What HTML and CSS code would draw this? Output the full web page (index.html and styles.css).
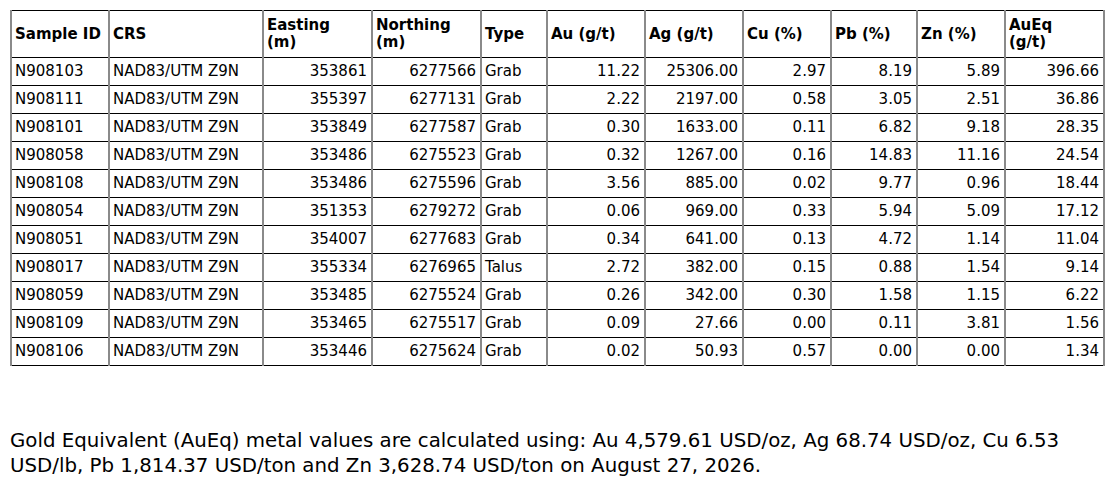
FILE: index.html
```html
<!DOCTYPE html>
<html>
<head>
<meta charset="utf-8">
<link rel="stylesheet" href="styles.css">
</head>
<body>
<table class="assay">
<colgroup>
<col class="c1"><col class="c2"><col class="c3"><col class="c4"><col class="c5"><col class="c6"><col class="c7"><col class="c8"><col class="c9"><col class="c10"><col class="c11">
</colgroup>
<thead>
<tr><th>Sample ID</th><th>CRS</th><th>Easting<br>(m)</th><th>Northing<br>(m)</th><th>Type</th><th>Au (g/t)</th><th>Ag (g/t)</th><th>Cu (%)</th><th>Pb (%)</th><th>Zn (%)</th><th>AuEq<br>(g/t)</th></tr>
</thead>
<tbody>
<tr><td>N908103</td><td>NAD83/UTM Z9N</td><td class="n">353861</td><td class="n">6277566</td><td>Grab</td><td class="n">11.22</td><td class="n">25306.00</td><td class="n">2.97</td><td class="n">8.19</td><td class="n">5.89</td><td class="n">396.66</td></tr>
<tr><td>N908111</td><td>NAD83/UTM Z9N</td><td class="n">355397</td><td class="n">6277131</td><td>Grab</td><td class="n">2.22</td><td class="n">2197.00</td><td class="n">0.58</td><td class="n">3.05</td><td class="n">2.51</td><td class="n">36.86</td></tr>
<tr><td>N908101</td><td>NAD83/UTM Z9N</td><td class="n">353849</td><td class="n">6277587</td><td>Grab</td><td class="n">0.30</td><td class="n">1633.00</td><td class="n">0.11</td><td class="n">6.82</td><td class="n">9.18</td><td class="n">28.35</td></tr>
<tr><td>N908058</td><td>NAD83/UTM Z9N</td><td class="n">353486</td><td class="n">6275523</td><td>Grab</td><td class="n">0.32</td><td class="n">1267.00</td><td class="n">0.16</td><td class="n">14.83</td><td class="n">11.16</td><td class="n">24.54</td></tr>
<tr><td>N908108</td><td>NAD83/UTM Z9N</td><td class="n">353486</td><td class="n">6275596</td><td>Grab</td><td class="n">3.56</td><td class="n">885.00</td><td class="n">0.02</td><td class="n">9.77</td><td class="n">0.96</td><td class="n">18.44</td></tr>
<tr><td>N908054</td><td>NAD83/UTM Z9N</td><td class="n">351353</td><td class="n">6279272</td><td>Grab</td><td class="n">0.06</td><td class="n">969.00</td><td class="n">0.33</td><td class="n">5.94</td><td class="n">5.09</td><td class="n">17.12</td></tr>
<tr><td>N908051</td><td>NAD83/UTM Z9N</td><td class="n">354007</td><td class="n">6277683</td><td>Grab</td><td class="n">0.34</td><td class="n">641.00</td><td class="n">0.13</td><td class="n">4.72</td><td class="n">1.14</td><td class="n">11.04</td></tr>
<tr><td>N908017</td><td>NAD83/UTM Z9N</td><td class="n">355334</td><td class="n">6276965</td><td>Talus</td><td class="n">2.72</td><td class="n">382.00</td><td class="n">0.15</td><td class="n">0.88</td><td class="n">1.54</td><td class="n">9.14</td></tr>
<tr><td>N908059</td><td>NAD83/UTM Z9N</td><td class="n">353485</td><td class="n">6275524</td><td>Grab</td><td class="n">0.26</td><td class="n">342.00</td><td class="n">0.30</td><td class="n">1.58</td><td class="n">1.15</td><td class="n">6.22</td></tr>
<tr><td>N908109</td><td>NAD83/UTM Z9N</td><td class="n">353465</td><td class="n">6275517</td><td>Grab</td><td class="n">0.09</td><td class="n">27.66</td><td class="n">0.00</td><td class="n">0.11</td><td class="n">3.81</td><td class="n">1.56</td></tr>
<tr><td>N908106</td><td>NAD83/UTM Z9N</td><td class="n">353446</td><td class="n">6275624</td><td>Grab</td><td class="n">0.02</td><td class="n">50.93</td><td class="n">0.57</td><td class="n">0.00</td><td class="n">0.00</td><td class="n">1.34</td></tr>
</tbody>
</table>
<p class="note">Gold Equivalent (AuEq) metal values are calculated using: Au 4,579.61 USD/oz, Ag 68.74 USD/oz, Cu 6.53 USD/lb, Pb 1,814.37 USD/ton and Zn 3,628.74 USD/ton on August 27, 2026.</p>
</body>
</html>
```
FILE: styles.css
```css
html, body {
  margin: 0;
  padding: 0;
  background: #fff;
}
body {
  padding: 10px 0 0 10px;
  font-family: "DejaVu Sans", Verdana, sans-serif;
  color: #000;
}
.assay {
  border-collapse: collapse;
  table-layout: fixed;
  width: 1093px;
  font-size: 15px;
}
.c1 { width: 98px; }
.c2 { width: 154px; }
.c3 { width: 109px; }
.c4 { width: 109px; }
.c5 { width: 66px; }
.c6 { width: 98px; }
.c7 { width: 98px; }
.c8 { width: 88px; }
.c9 { width: 86px; }
.c10 { width: 88px; }
.c11 { width: 99px; }
.assay th, .assay td {
  border-left: 2px solid #8a8a8a;
  border-right: 2px solid #8a8a8a;
  border-top: 1px solid #000;
  border-bottom: 1px solid #000;
  padding: 0 3px;
  vertical-align: middle;
  text-align: left;
  line-height: 17px;
}
.assay th {
  height: 46px;
  font-weight: bold;
}
.assay td {
  height: 27px;
}
.assay td.n {
  text-align: right;
  padding-right: 4px;
}
.note {
  margin: 62px 0 0 0;
  width: 1085px;
  font-size: 19.8px;
  line-height: 25px;
}
```
